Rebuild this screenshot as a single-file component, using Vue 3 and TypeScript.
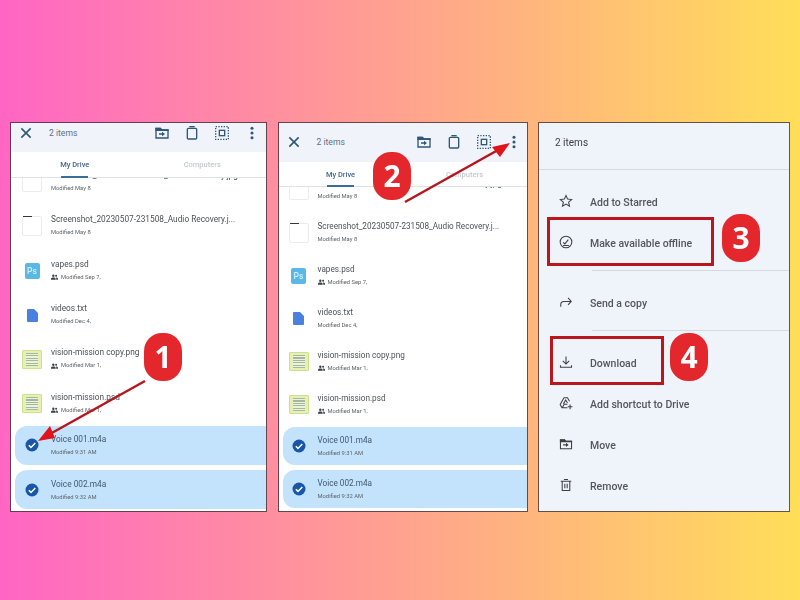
<script setup lang="ts">
type FileRow = {
  name: string
  meta: string
  icon: 'blank' | 'ps' | 'doc' | 'thumb' | 'check'
  shared?: boolean
}

const files: FileRow[] = [
  { name: 'Screenshot_20230507-231508_Audio Recovery.jpg', meta: 'Modified May 8', icon: 'blank' },
  { name: 'Screenshot_20230507-231508_Audio Recovery.j...', meta: 'Modified May 8', icon: 'blank' },
  { name: 'vapes.psd', meta: 'Modified Sep 7,', icon: 'ps', shared: true },
  { name: 'videos.txt', meta: 'Modified Dec 4,', icon: 'doc' },
  { name: 'vision-mission copy.png', meta: 'Modified Mar 1,', icon: 'thumb', shared: true },
  { name: 'vision-mission.psd', meta: 'Modified Mar 1,', icon: 'thumb', shared: true },
  { name: 'Voice 001.m4a', meta: 'Modified 9:31 AM', icon: 'check' },
  { name: 'Voice 002.m4a', meta: 'Modified 9:32 AM', icon: 'check' },
]

const panels = ['one', 'two']

const menuGroups = [
  [
    { label: 'Add to Starred', icon: 'star' },
    { label: 'Make available offline', icon: 'offline' },
  ],
  [{ label: 'Send a copy', icon: 'send' }],
  [
    { label: 'Download', icon: 'download' },
    { label: 'Add shortcut to Drive', icon: 'shortcut' },
    { label: 'Move', icon: 'move' },
    { label: 'Remove', icon: 'remove' },
  ],
]

const badges = [
  { n: 1, cls: 'b1' },
  { n: 2, cls: 'b2' },
  { n: 3, cls: 'b3' },
  { n: 4, cls: 'b4' },
]
</script>

<template>
  <div class="stage">
    <section v-for="p in panels" :key="p" class="phone" :class="p">
      <header class="bar">
        <svg class="ico close" viewBox="0 0 24 24"><path d="M5 5l14 14M19 5L5 19" /></svg>
        <span class="count">2 items</span>
        <div class="actions">
          <svg class="ico" viewBox="0 0 24 24">
            <path d="M3 19.500V5h6.500l2 2.500H21v12z" />
            <path class="solid" d="M2 4h8l2 2.500h10v2.500H2z" />
            <path class="solid" d="M7.500 12.500h4.500V10l4.500 3.500L12 17v-2.500H7.500z" />
          </svg>
          <svg class="ico" viewBox="0 0 24 24">
            <rect x="5" y="5" width="14" height="16" rx="1.500" />
            <path d="M8 2.500h8" />
          </svg>
          <svg class="ico" viewBox="0 0 24 24">
            <rect x="2.500" y="2.500" width="19" height="19" stroke-dasharray="2 2" />
            <rect x="8" y="8" width="8" height="8" />
          </svg>
          <svg class="ico" viewBox="0 0 24 24">
            <circle class="dot" cx="12" cy="5" r="2.300" />
            <circle class="dot" cx="12" cy="12" r="2.300" />
            <circle class="dot" cx="12" cy="19" r="2.300" />
          </svg>
        </div>
      </header>

      <nav class="tabs">
        <div class="tab active"><span>My Drive</span></div>
        <div class="tab"><span>Computers</span></div>
      </nav>

      <ul class="list">
        <li v-for="(f, i) in files" :key="i" class="row" :class="{ selected: f.icon === 'check' }">
          <div class="lead">
            <div v-if="f.icon === 'blank'" class="blank"></div>
            <div v-else-if="f.icon === 'ps'" class="ps">Ps</div>
            <svg v-else-if="f.icon === 'doc'" class="doc" viewBox="0 0 11 13">
              <path d="M1 0h6l4 4v8a1 1 0 0 1-1 1H1a1 1 0 0 1-1-1V1a1 1 0 0 1 1-1z" />
            </svg>
            <div v-else-if="f.icon === 'thumb'" class="thumb"><i></i></div>
            <svg v-else class="tick" viewBox="0 0 14 14">
              <circle cx="7" cy="7" r="6.500" />
              <path d="M3.800 7.200l2.200 2.200 4.300-4.400" />
            </svg>
          </div>
          <div class="text">
            <div class="name">{{ f.name }}</div>
            <div class="meta">
              <svg v-if="f.shared" class="people" viewBox="0 0 12 9">
                <circle cx="4" cy="2.300" r="2" />
                <circle cx="8.800" cy="2.500" r="1.700" />
                <path d="M0 9V7.300C0 6 2 5.200 4 5.200s4 .8 4 2.100V9zM9 9V7c0-.7-.3-1.300-.8-1.700 1.700 0 3.800.7 3.800 2V9z" />
              </svg>
              {{ f.meta }}
            </div>
          </div>
        </li>
      </ul>
    </section>

    <section class="phone three">
      <header class="sheet-head">2 items</header>
      <template v-for="(group, gi) in menuGroups" :key="gi">
        <div v-if="gi > 0" class="rule"></div>
        <ul class="menu">
          <li v-for="item in group" :key="item.label" class="menu-row">
            <svg class="ico menu-ico" viewBox="0 0 24 24">
              <template v-if="item.icon === 'star'">
                <path d="M12 2.500l2.800 6.300 6.900.7-5.200 4.600 1.500 6.800-6-3.500-6 3.500 1.500-6.800-5.200-4.600 6.900-.7z" />
              </template>
              <template v-else-if="item.icon === 'offline'">
                <circle cx="12" cy="12" r="10" />
                <path d="M7 12.500l3 2.800 6-7.300M7 18h10" />
              </template>
              <template v-else-if="item.icon === 'send'">
                <path d="M3 20v-3.500c0-3.500 2.500-5.500 5.500-5.500H21M15.500 5l5.500 6-5.500 6" />
              </template>
              <template v-else-if="item.icon === 'download'">
                <path d="M12 2.500v13M6.500 10l5.500 5.500 5.500-5.500M2.500 17.500v3.500h19v-3.500" />
              </template>
              <template v-else-if="item.icon === 'shortcut'">
                <path d="M8.500 3h6l3.500 6M8.500 3L2 14.500 5 20h9.500M5.500 20l3.500-6h5.500M7.500 13.500L11.500 7l3 5" />
                <path d="M19 14.500v8M15 18.500h8" />
              </template>
              <template v-else-if="item.icon === 'move'">
                <path d="M2.500 20V5h7l2 2.500h10V20z" />
                <path class="solid" d="M1.500 4h8.500l2 2.500h10.500v2.500h-21z" />
                <path class="solid" d="M7 12.500h5V10l4.500 3.500L12 17v-2.500H7z" />
              </template>
              <template v-else>
                <path d="M5.500 6v15.500h13V6M3 5.500h18M8.500 2.500h7M10 10v7.500M14 10v7.500" />
              </template>
            </svg>
            <span>{{ item.label }}</span>
          </li>
        </ul>
      </template>
    </section>

    <!-- callouts sit on top of the screenshots -->
    <svg class="arrows" viewBox="0 0 800 600">
      <path class="shaft" d="M145 381L50 434" />
      <path class="head" d="M38 441L50 426L55 438z" />
      <path class="shaft" d="M405 202L498 150" />
      <path class="head" d="M510 143L492 147L500 157z" />
    </svg>
    <div class="callout c3"></div>
    <div class="callout c4"></div>
    <div v-for="b in badges" :key="b.n" class="badge" :class="b.cls">{{ b.n }}</div>
  </div>
</template>

<style scoped>
.stage {
  position: relative;
  box-sizing: border-box;
  width: 800px;
  height: 600px;
  padding: 123px 11px 0;
  display: flex;
  align-items: flex-start;
  gap: 12.500px;
  overflow: hidden;
  background: linear-gradient(90deg, #ff66c4 0%, #ffde59 100%);
  font-family: Roboto, "Liberation Sans", sans-serif;
}

.phone {
  box-sizing: border-box;
  height: 388px;
  background: #fff;
  box-shadow: 0 0 0 1px rgba(50, 40, 50, 0.75);
  display: flex;
  flex-direction: column;
  overflow: hidden;
  flex: none;
  filter: blur(0.35px);
}
.phone.one { width: 255px; --bar: 29px; --row: 44.300px; --sel-h: 39.300px; --sel-top: 0px; --first: -18px; --tabs: 26px; --lead: 36px; --lead-pad: 2px; --name: 8.300px; --bar-pad: 10px; }
.phone.two { width: 248px; --bar: 39px; --row: 43px; --sel-h: 38px; --sel-top: 1px; --first: -19px; --tabs: 25px; --lead: 35px; --lead-pad: 3px; --name: 8.200px; --bar-pad: 1px; }
.phone.three { width: 250px; background: #eff3fa; }

.ico {
  width: 16px;
  height: 16px;
  flex: none;
  fill: none;
  stroke: #2f5878;
  stroke-width: 2;
}
.ico .dot { fill: #2f5878; stroke: none; }
.ico .solid { fill: #2f5878; stroke: none; }

.bar {
  box-sizing: border-box;
  height: var(--bar);
  background: #f0f4fa;
  display: flex;
  align-items: center;
  padding: 0 6px var(--bar-pad) 7px;
  flex: none;
}
.two .bar { padding-right: 5px; }
.close { stroke-width: 2.400; }
.count {
  margin-left: 15px;
  font-size: 8.600px;
  color: #5a7088;
}
.actions {
  margin-left: auto;
  display: flex;
  gap: 14px;
}
.two .actions { gap: 13.700px; }

.tabs {
  height: var(--tabs);
  display: flex;
  flex: none;
  border-bottom: 1px solid #dfe2e6;
  box-sizing: border-box;
}
.tab {
  flex: 1;
  display: flex;
  justify-content: center;
  align-items: center;
  position: relative;
  font-size: 7.500px;
  font-weight: 500;
  color: #c4cad1;
}
.tab.active { color: #47688a; }
.tab.active::after {
  content: "";
  position: absolute;
  bottom: -1px;
  left: 50%;
  width: 27px;
  height: 2px;
  margin-left: -13.500px;
  background: #3a6d9a;
}

.list {
  list-style: none;
  margin: 0;
  padding: 0;
  flex: 1;
  min-height: 0;
  overflow: hidden;
}
.row {
  height: var(--row);
  display: flex;
  align-items: center;
  margin-left: 4px;
}
.row:first-child { margin-top: var(--first); }
.row.selected {
  height: var(--sel-h);
  margin-top: var(--sel-top);
  background: #c2e3fb;
  border-radius: 12px 0 0 12px;
}
.row.selected + .row.selected { margin-top: 5px; }
.selected .text { padding-top: 2px; }
.lead {
  width: var(--lead);
  display: flex;
  justify-content: center;
  padding-right: var(--lead-pad);
  box-sizing: border-box;
  flex: none;
}
.text { min-width: 0; }
.name {
  font-size: var(--name);
  line-height: 13px;
  color: #4b5258;
  white-space: nowrap;
}
.selected .name { color: #42586c; }
.meta {
  font-size: 5.800px;
  line-height: 13px;
  color: #5d6368;
  display: flex;
  align-items: center;
  gap: 3px;
}
.people { width: 7px; height: 6px; fill: #3c4043; }

.blank {
  width: 20px;
  height: 20px;
  background: #fff;
  border: 1px solid #ececec;
  border-radius: 2px;
  position: relative;
  box-sizing: border-box;
}
.blank::before {
  content: "";
  position: absolute;
  top: -1px;
  left: 0;
  width: 9px;
  height: 1px;
  background: #33363a;
}
.ps {
  width: 15px;
  height: 16px;
  border-radius: 2px;
  background: #5ab7e6;
  color: #cdeeff;
  font-size: 8.500px;
  font-weight: 500;
  line-height: 16px;
  text-align: center;
}
.doc { width: 11px; height: 13px; fill: #4a80de; }
.thumb {
  width: 20px;
  height: 19px;
  box-sizing: border-box;
  border: 1px solid #cfe08a;
  border-radius: 1px;
  background: #e6efb4;
  padding: 2px 3px;
  filter: blur(0.5px);
}
.thumb i {
  display: block;
  height: 100%;
  background: repeating-linear-gradient(180deg, #a5b7a0 0, #a5b7a0 1px, #eef2d8 1px, #eef2d8 2.500px);
}
.tick { width: 14px; height: 14px; }
.tick circle { fill: #1a56a8; }
.tick path { fill: none; stroke: #fff; stroke-width: 1.500; }

.sheet-head {
  box-sizing: border-box;
  height: 47px;
  flex: none;
  padding: 0 0 7px 16px;
  display: flex;
  align-items: center;
  font-size: 10px;
  color: #3c4043;
  border-bottom: 1px solid #d5d8dc;
}
.menu {
  list-style: none;
  margin: 0;
  padding: 12px 0 6px;
}
.menu-row {
  height: 41px;
  display: flex;
  align-items: center;
  padding-left: 20px;
  gap: 17px;
  font-size: 10.500px;
  font-weight: 500;
  color: #53575b;
}
.menu-ico { width: 14px; height: 14px; stroke: #3c4043; stroke-width: 1.800; margin-top: -3px; }
.menu-ico .solid { fill: #3c4043; }
.rule {
  height: 1px;
  flex: none;
  margin-left: 53px;
  background: #d5d8dc;
}

.arrows {
  position: absolute;
  inset: 0;
  width: 800px;
  height: 600px;
  pointer-events: none;
}
.shaft { stroke: #b5171e; stroke-width: 2.500; fill: none; }
.head { fill: #e0141b; }

.callout {
  position: absolute;
  box-sizing: border-box;
  border: 3px solid #b9161e;
}
.c3 { left: 547px; top: 217px; width: 167px; height: 49px; }
.c4 { left: 550px; top: 336px; width: 114px; height: 49px; }

.badge {
  position: absolute;
  width: 38px;
  height: 48px;
  border-radius: 18px;
  background: #e4272d;
  color: #fff;
  font-size: 30px;
  font-weight: 700;
  line-height: 48px;
  text-align: center;
  font-family: "Open Sans", Roboto, sans-serif;
}
.b1 { left: 144px; top: 333px; }
.b2 { left: 373px; top: 152px; }
.b3 { left: 722px; top: 214px; }
.b4 { left: 670px; top: 333px; }
</style>
